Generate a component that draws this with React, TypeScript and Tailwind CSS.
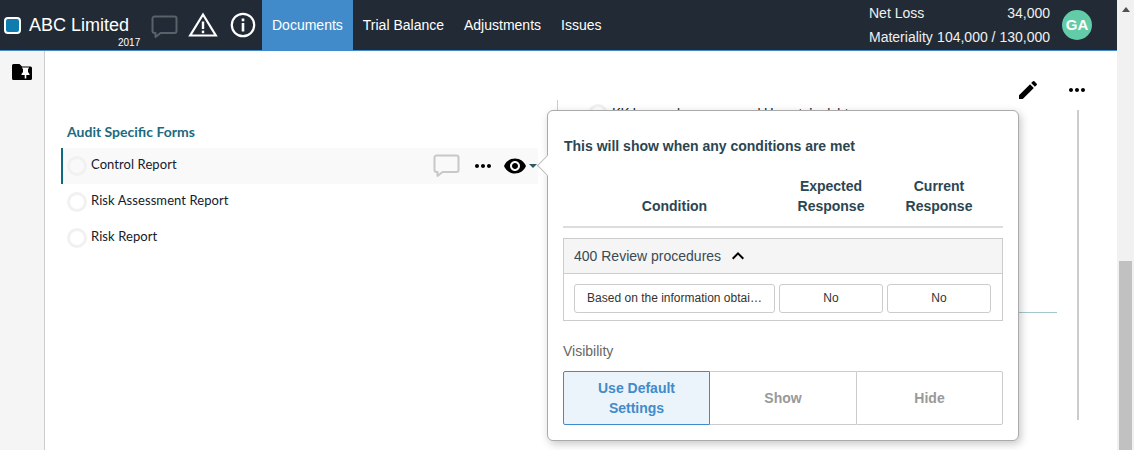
import { MdEdit, MdMoreHoriz, MdVisibility, MdKeyboardArrowUp } from "react-icons/md";

const Bubble = ({ className }: { className: string }) => (
  <svg viewBox="0 0 27 24" className={className} fill="none" stroke="currentColor" strokeWidth="2" strokeLinejoin="round">
    <path d="M3.5 1.5H23.5a2 2 0 0 1 2 2V16a2 2 0 0 1-2 2H9.5L4.5 22V18H3.5a2 2 0 0 1-2-2V3.5a2 2 0 0 1 2-2Z" />
  </svg>
);

const Warning = () => (
  <svg viewBox="0 0 30 25" className="w-[30px] h-[25px] text-white">
    <path d="M15 2.5 L27.8 23.5 H2.2 Z" fill="none" stroke="currentColor" strokeWidth="2.2" strokeLinejoin="miter" />
    <rect x="13.8" y="9.5" width="2.4" height="7.5" fill="currentColor" />
    <rect x="13.8" y="18.6" width="2.4" height="2.6" fill="currentColor" />
  </svg>
);

const Info = () => (
  <svg viewBox="0 0 26 26" className="w-[26px] h-[26px] text-white">
    <circle cx="13" cy="13" r="11.2" fill="none" stroke="currentColor" strokeWidth="2.2" />
    <rect x="11.7" y="6.5" width="2.6" height="2.8" fill="currentColor" />
    <rect x="11.7" y="11" width="2.6" height="8.5" fill="currentColor" />
  </svg>
);

const FolderPin = () => (
  <svg viewBox="0 0 20 16" className="w-[20px] h-[16px]">
    <path d="M1.5 0H7.5L10 2.5H18.5A1.5 1.5 0 0 1 20 4V14.5A1.5 1.5 0 0 1 18.5 16H1.5A1.5 1.5 0 0 1 0 14.5V1.5A1.5 1.5 0 0 1 1.5 0Z" fill="#000" />
    <path d="M10 3.5H17V4.5H16V8L17.5 10V11H14.3V14.5H12.7V11H9.5V10L11 8V4.5H10Z" fill="#fff" />
  </svg>
);

const Circle = () => <span className="block w-[20px] h-[20px] shrink-0 rounded-full border-[3px] border-[#f1f1f1]" />;

const Row = ({ label, active }: { label: string; active?: boolean }) => (
  <div className={`flex h-[36px] items-center pl-[4px] ${active ? "border-l-2 border-[#0f6b80] bg-[#f9f9f9]" : "pl-[6px]"}`}>
    <Circle />
    <span className="ml-[4px] -mt-[3px] text-[13px] tracking-[0.08px] text-[#14202b] [font-family:Lato,sans-serif]">{label}</span>
    {active && (
      <div className="ml-auto flex items-center">
        <Bubble className="w-[27px] h-[24px] text-[#c8c8c8]" />
        <MdMoreHoriz className="ml-[11px] w-[24px] h-[24px] text-black" />
        <MdVisibility className="ml-[8px] w-[24px] h-[24px] text-black" />
        <span className="ml-[2px] mr-[1px] w-0 h-0 border-x-[4px] border-x-transparent border-t-[4px] border-t-[#2d5a62]" />
      </div>
    )}
  </div>
);

const Cell = ({ children }: { children: React.ReactNode }) => (
  <div className="h-[29px] flex items-center justify-center rounded-[3px] border border-[#ccc] bg-white pb-[2px] text-[12px] text-[#333] whitespace-nowrap overflow-hidden">
    {children}
  </div>
);

const Popover = () => (
  <div className="absolute left-[547px] top-[110px] w-[472px] h-[331px] rounded-[6px] border border-[#aaa] bg-white px-[15px] shadow-[2px_3px_8px_rgba(0,0,0,0.22)] z-10 [font-family:'Liberation_Sans',sans-serif]">
    <span className="absolute -left-[8px] top-[47px] w-[15px] h-[15px] rotate-45 bg-white border-l border-b border-[#bbb]" />
    <div className="relative pt-[26px] pl-[1px] text-[14px] leading-[19px] font-bold text-[#2b4652]">
      This will show when any conditions are met
    </div>
    <div className="relative mt-[10px] grid grid-cols-[201px_104px_104px] gap-x-[4px] pl-[11px] text-center text-[14px] leading-[20px] font-bold text-[#2b4652] border-b-2 border-[#ddd] pb-[10px] h-[62px] items-end">
      <div>Condition</div>
      <div>Expected<br />Response</div>
      <div>Current<br />Response</div>
    </div>
    <div className="mt-[10px] border border-[#ccc]">
      <div className="flex h-[35px] items-center border-b border-[#ccc] bg-[#f5f5f5] pl-[10px] text-[14px] text-[#3a4a54]">
        400 Review procedures
        <MdKeyboardArrowUp className="ml-[5px] w-[24px] h-[24px] text-black" />
      </div>
      <div className="grid grid-cols-[201px_104px_104px] gap-x-[4px] pl-[10px] pt-[10px] pb-[7px]">
        <Cell>Based on the information obtai…</Cell>
        <Cell>No</Cell>
        <Cell>No</Cell>
      </div>
    </div>
    <div className="mt-[21px] text-[14px] leading-[18px] text-[#666]">Visibility</div>
    <div className="mt-[11px] grid grid-cols-[147px_146px_147px] h-[54px] text-center text-[14px] leading-[20px] font-bold text-[#999]">
      <div className="flex items-center justify-center rounded-l-[2px] border border-[#428bca] bg-[#ebf3fb] text-[#428bca] px-[20px]">Use Default Settings</div>
      <div className="flex items-center justify-center border-y border-[#ccc]">Show</div>
      <div className="flex items-center justify-center rounded-r-[2px] border border-[#ccc]">Hide</div>
    </div>
  </div>
);

export default function App() {
  return (
    <div className="relative flex h-[450px] w-[1134px] overflow-hidden bg-white [font-family:'Liberation_Sans',sans-serif]">
      <div className="flex min-w-0 flex-1 flex-col">
        <header className="flex h-[51px] shrink-0 items-stretch border-b border-[#428bca] bg-[#222b35] text-white">
          <div className="flex items-center pl-[4px]">
            <span className="h-[17px] w-[17px] rounded-[4px] border-2 border-white bg-[#0f7cb0]" />
            <div className="relative ml-[8px] w-[111px] text-[18px] leading-[20px]">
              ABC Limited
              <span className="absolute left-[89px] top-[22px] text-[10px] leading-[12px]">2017</span>
            </div>
          </div>
          <div className="flex items-center pl-[11px]">
            <Bubble className="w-[27px] h-[24px] mt-[4px] text-[#5a6168]" />
            <span className="ml-[10px] -mt-[1px]"><Warning /></span>
            <span className="ml-[12px]"><Info /></span>
          </div>
          <nav className="ml-[6px] flex text-[14px]">
            <div className="flex items-center bg-[#428bca] px-[10px]">Documents</div>
            <div className="flex items-center px-[10px]">Trial Balance</div>
            <div className="flex items-center px-[10px]">Adjustments</div>
            <div className="flex items-center px-[10px]">Issues</div>
          </nav>
          <div className="ml-auto flex items-center pr-[25px]">
            <div className="w-[181px] text-[14px] leading-[24px] text-[#f0f0f0]">
              <div className="flex justify-between"><span>Net Loss</span><span>34,000</span></div>
              <div className="flex justify-between"><span>Materiality</span><span>104,000 / 130,000</span></div>
            </div>
            <div className="ml-[12px] flex h-[30px] w-[30px] items-center justify-center rounded-full bg-[#62cba8] text-[15px] font-bold">GA</div>
          </div>
        </header>
        <div className="flex min-h-0 flex-1">
          <aside className="w-[45px] shrink-0 border-r border-[#ccc] bg-[#f5f5f5] pt-[13px] pl-[12px]">
            <FolderPin />
          </aside>
          <main className="flex min-w-0 flex-1 flex-col">
            <div className="flex h-[51px] -mb-[2px] shrink-0 items-end justify-end pr-[28px]">
              <MdEdit className="h-[24px] w-[24px] text-black" />
              <MdMoreHoriz className="ml-[25px] h-[24px] w-[24px] text-black" />
            </div>
            <div className="flex min-h-0 flex-1 overflow-hidden">
              <div className="ml-[16px] w-[477px] shrink-0 pt-[23px]">
                <div className="pl-[6px] text-[14px] font-bold leading-[18px] text-[#1b6a80] mb-[7px] [font-family:Lato,sans-serif]">Audit Specific Forms</div>
                <Row label="Control Report" active />
                <Row label="Risk Assessment Report" />
                <Row label="Risk Report" />
              </div>
              <div className="ml-[19px] flex w-[500px] shrink-0 flex-col">
                <div className="flex h-[15px] items-start border-l border-[#ccc] pl-[30px] pt-[4px]">
                  <Circle />
                  <span className="ml-[4px] text-[13px] text-[#14202b] [font-family:Lato,sans-serif]">KK Incurred expenses and Uncertain debt</span>
                </div>
                <div className="mt-[197px] h-px bg-[#a5c7cc]" />
              </div>
              <div className="ml-[20px] mt-[10px] h-[310px] w-0 border-l-2 border-[#ccc]" />
            </div>
          </main>
        </div>
      </div>
      <div className="flex w-[17px] shrink-0 flex-col bg-[#f1f1f1]">
        <span className="mx-auto mt-[7px] h-0 w-0 border-x-[4px] border-x-transparent border-b-[5px] border-b-[#505050]" />
        <div className="mt-auto ml-[2px] h-[189px] w-[13px] bg-[#c1c1c1]" />
      </div>
      <Popover />
    </div>
  );
}
